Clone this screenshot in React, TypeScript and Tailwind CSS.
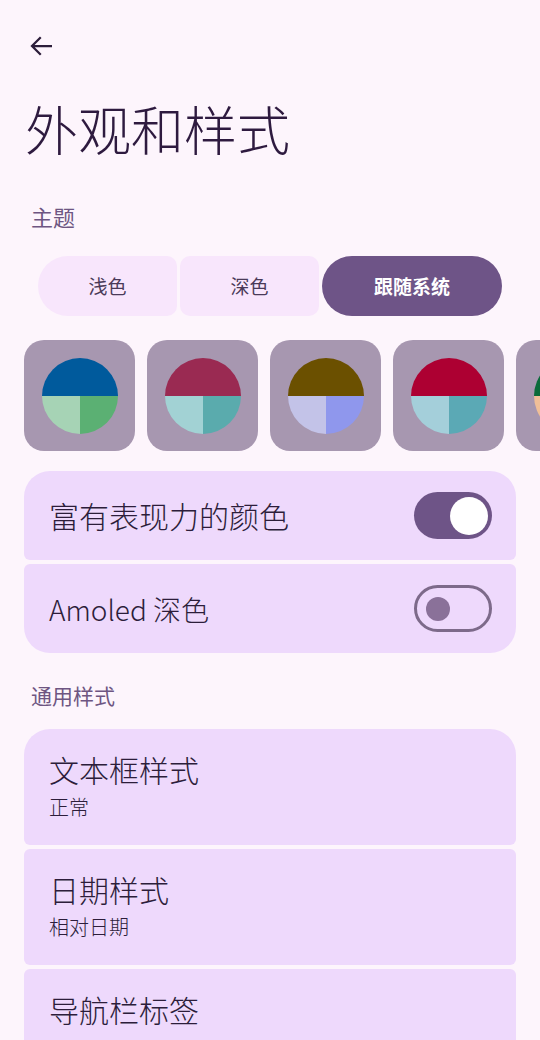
import { useState } from "react";

const font = { fontFamily: '"Noto Sans CJK SC", "Noto Sans", sans-serif' };

const palettes = [
  { top: "#005a9c", left: "#a6d3b5", right: "#5bb073" },
  { top: "#9a2a52", left: "#a2d2d4", right: "#5aabad" },
  { top: "#6b5000", left: "#c3c3e8", right: "#8f97ed" },
  { top: "#ad0032", left: "#a4cfda", right: "#5ba9b5" },
  { top: "#0b6b3a", left: "#f0bf98", right: "#d9a37a" },
];

const PaletteDot = ({ top, left, right }: { top: string; left: string; right: string }) => (
  <svg width="76" height="76" viewBox="0 0 76 76">
    <path d="M0 38 A38 38 0 0 1 76 38 Z" fill={top} />
    <path d="M0 38 L38 38 L38 76 A38 38 0 0 1 0 38 Z" fill={left} />
    <path d="M38 38 L76 38 A38 38 0 0 1 38 76 Z" fill={right} />
  </svg>
);

const Toggle = ({ on, onClick }: { on: boolean; onClick: () => void }) =>
  on ? (
    <button
      onClick={onClick}
      className="w-[78px] h-[47px] rounded-full bg-[#6e5487] flex items-center justify-end pr-[4px] shrink-0"
    >
      <span className="w-[38px] h-[38px] rounded-full bg-white block" />
    </button>
  ) : (
    <button
      onClick={onClick}
      className="w-[78px] h-[47px] rounded-full border-[3px] border-[#7d6a8a] flex items-center pl-[9px] shrink-0"
    >
      <span className="w-[24px] h-[24px] rounded-full bg-[#8a7199] block" />
    </button>
  );

export default function App() {
  const [theme, setTheme] = useState(2);
  const [expressive, setExpressive] = useState(true);
  const [amoled, setAmoled] = useState(false);

  const themes = ["浅色", "深色", "跟随系统"];

  return (
    <div style={font} className="w-[540px] h-[1040px] overflow-hidden bg-[#fdf5fc] text-[#2c1d3a]">
      {/* top bar */}
      <div className="h-[92px] flex items-center pl-[27px]">
        <svg width="30" height="30" viewBox="0 0 24 24" fill="none" stroke="#2c1d3a" strokeWidth="1.8">
          <path d="M20 12H4M11 5l-7 7 7 7" />
        </svg>
      </div>

      <h1 className="px-[25px] pt-[6px] text-[53px] leading-[60px] h-[84px] font-light text-[#2e1a3f]">外观和样式</h1>

      {/* theme */}
      <div className="px-[31px] pt-[25px] text-[22px] leading-[30px] text-[#6e5582]">主题</div>

      <div className="flex gap-[3px] px-[38px] mt-[25px]">
        {themes.map((t, i) => {
          const active = theme === i;
          const rounded = active
            ? "rounded-full"
            : i === 0
            ? "rounded-l-[30px] rounded-r-[10px]"
            : "rounded-[10px]";
          return (
            <button
              key={t}
              onClick={() => setTheme(i)}
              className={`h-[60px] text-[19px] ${rounded} ${
                active
                  ? "bg-[#6e5487] text-white font-bold w-[180px]"
                  : "bg-[#f8e6fc] text-[#4a3a58] w-[139px]"
              }`}
            >
              {t}
            </button>
          );
        })}
      </div>

      <div className="flex gap-[12px] pl-[24px] mt-[24px]">
        {palettes.map((p, i) => (
          <div
            key={i}
            className="w-[111px] h-[111px] shrink-0 rounded-[20px] bg-[#a797b0] flex items-center justify-center"
          >
            <PaletteDot {...p} />
          </div>
        ))}
      </div>

      {/* switches */}
      <div className="px-[24px] mt-[20px] flex flex-col gap-[4px] font-light">
        <div className="h-[89px] rounded-t-[26px] rounded-b-[6px] bg-[#eed9fc] flex items-center justify-between pl-[25px] pr-[24px]">
          <span className="text-[30px]">富有表现力的颜色</span>
          <Toggle on={expressive} onClick={() => setExpressive(!expressive)} />
        </div>
        <div className="h-[89px] rounded-b-[26px] rounded-t-[6px] bg-[#eed9fc] flex items-center justify-between pl-[25px] pr-[24px]">
          <span className="text-[28px]">Amoled 深色</span>
          <Toggle on={amoled} onClick={() => setAmoled(!amoled)} />
        </div>
      </div>

      <div className="px-[31px] mt-[27px] text-[21px] leading-[30px] text-[#6e5582]">通用样式</div>

      <div className="px-[24px] mt-[19px] flex flex-col gap-[4px]">
        {[
          { t: "文本框样式", s: "正常", r: "rounded-t-[26px] rounded-b-[6px]" },
          { t: "日期样式", s: "相对日期", r: "rounded-[6px]" },
          { t: "导航栏标签", s: "", r: "rounded-[6px]" },
        ].map((row) => (
          <div key={row.t} className={`h-[116px] ${row.r} bg-[#eed9fc] pl-[25px] pt-[20px]`}>
            <div className="text-[30px] leading-[40px] font-light">{row.t}</div>
            <div className="text-[20px] leading-[28px] mt-[4px] font-light">{row.s}</div>
          </div>
        ))}
      </div>
    </div>
  );
}
